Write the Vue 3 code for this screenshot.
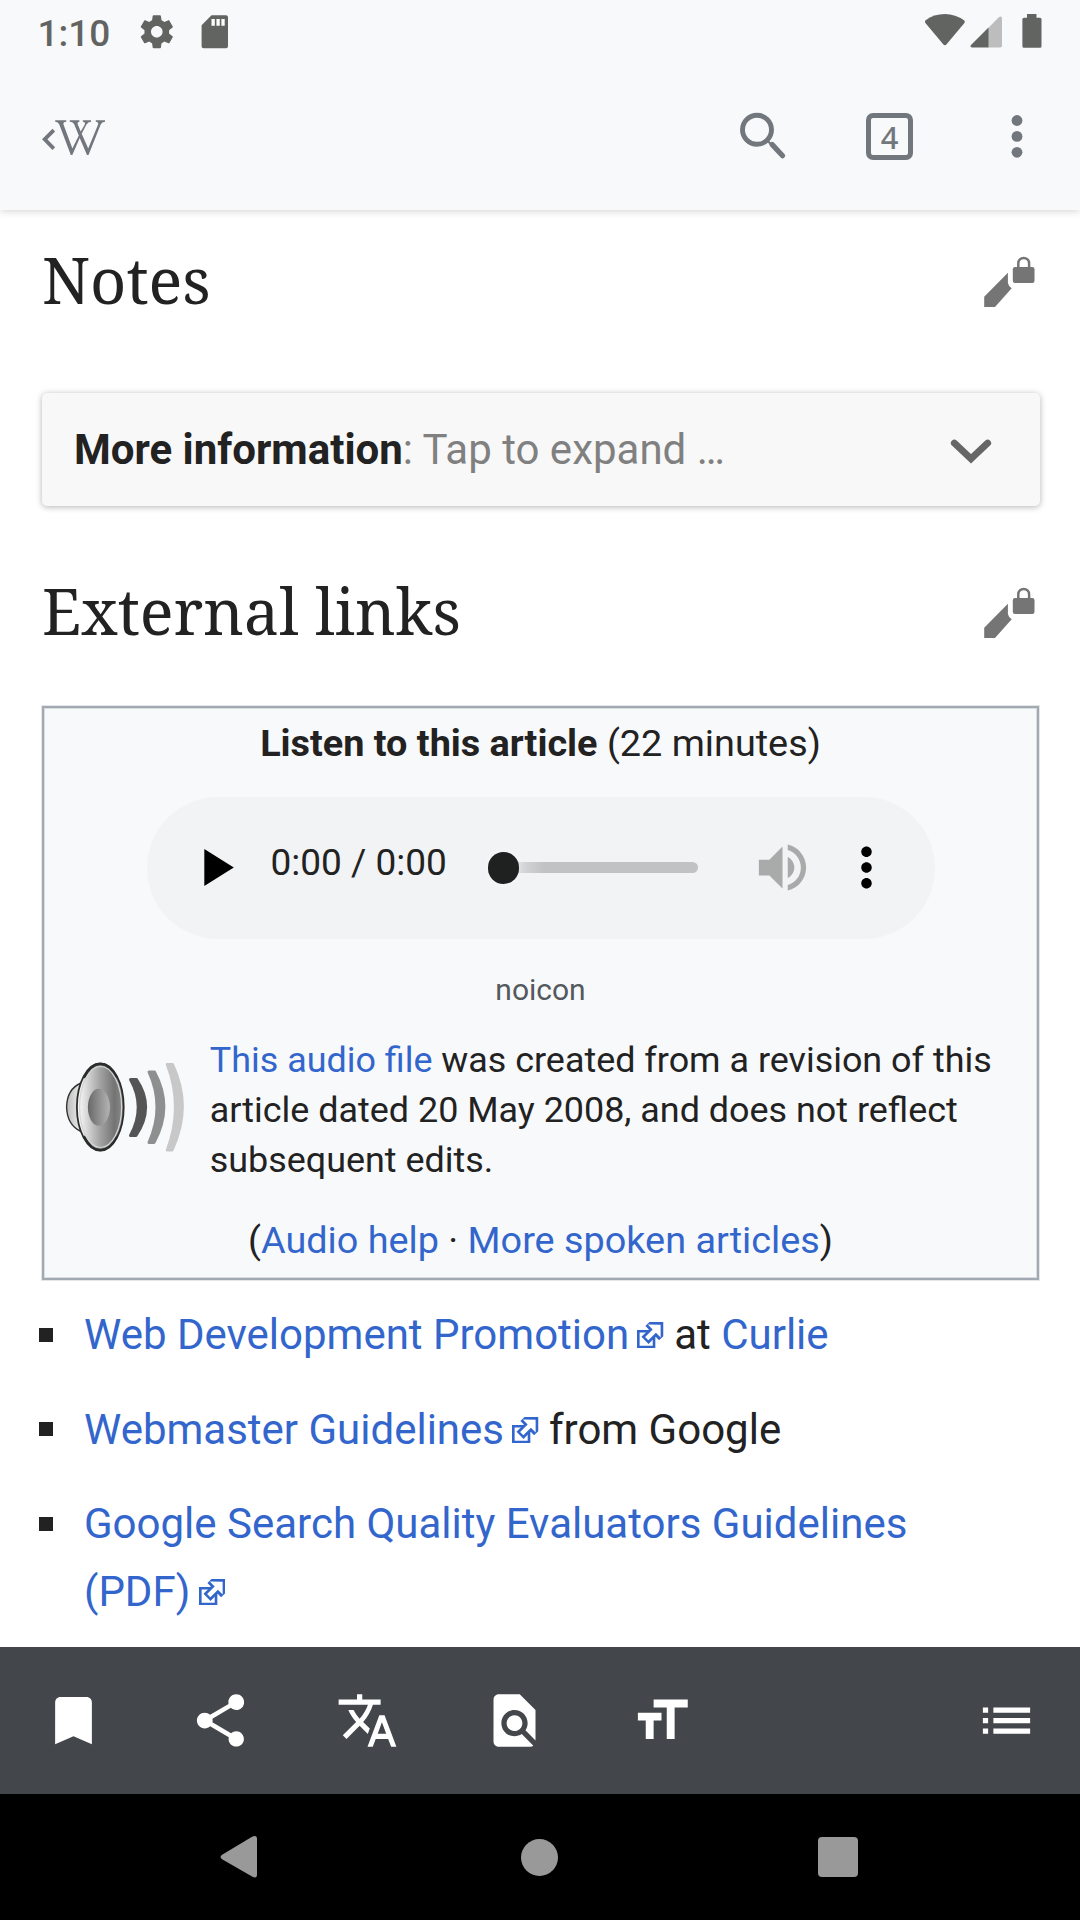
<script setup>
const tools = [
  { name: 'save', d: 'M17 3H7c-1.1 0-1.99.9-1.99 2L5 21l7-3 7 3V5c0-1.1-.9-2-2-2z' },
  { name: 'share', d: 'M18 16.08c-.76 0-1.44.3-1.96.77L8.91 12.7c.05-.23.09-.46.09-.7s-.04-.47-.09-.7l7.05-4.11c.54.5 1.25.81 2.04.81 1.66 0 3-1.34 3-3s-1.34-3-3-3-3 1.34-3 3c0 .24.04.47.09.7L8.04 9.81C7.5 9.31 6.79 9 6 9c-1.66 0-3 1.34-3 3s1.34 3 3 3c.79 0 1.5-.31 2.04-.81l7.12 4.16c-.05.21-.08.43-.08.65 0 1.61 1.31 2.92 2.92 2.92s2.92-1.31 2.92-2.92-1.31-2.92-2.92-2.92z' },
  { name: 'language', d: 'M12.87 15.07l-2.54-2.51.03-.03c1.74-1.94 2.98-4.17 3.71-6.53H17V4h-7V2H8v2H1v1.99h11.17C11.5 7.92 10.44 9.75 9 11.35 8.07 10.32 7.3 9.19 6.69 8h-2c.73 1.63 1.73 3.17 2.98 4.56l-5.09 5.02L4 19l5-5 3.11 3.11.76-2.04zM18.5 10h-2L12 22h2l1.12-3h4.75L21 22h2l-4.5-12zm-2.62 7l1.62-4.33L19.12 17h-3.24z' },
  { name: 'find', d: 'M20 19.59V8l-6-6H6c-1.1 0-1.99.9-1.99 2L4 20c0 1.1.89 2 1.99 2H18c.45 0 .85-.15 1.19-.4l-4.43-4.43c-.8.52-1.74.83-2.76.83-2.76 0-5-2.24-5-5s2.24-5 5-5 5 2.24 5 5c0 1.02-.31 1.96-.83 2.75L20 19.59zM9 13c0 1.66 1.34 3 3 3s3-1.34 3-3-1.34-3-3-3-3 1.34-3 3z' },
  { name: 'theme', d: 'M9 4v3h5v12h3V7h5V4H9zm-6 8h3v7h3v-7h3V9H3v3z' },
  { name: 'contents', d: 'M3 13h2v-2H3v2zm0 4h2v-2H3v2zm0-8h2V7H3v2zm4 4h14v-2H7v2zm0 4h14v-2H7v2zM7 7v2h14V7H7z' }
]

const links = [
  { label: 'Web Development Promotion', tail: ' at ', link: 'Curlie' },
  { label: 'Webmaster Guidelines', tail: ' from Google', link: '' },
  { label: 'Google Search Quality Evaluators Guidelines (PDF)', tail: '', link: '' }
]
</script>

<template>
  <div class="screen">
    <header class="top">
      <div class="status">
        <span class="clock">1:10</span>
        <svg class="gear" viewBox="0 0 24 24" width="39.6" height="39.6"><path d="M19.43 12.98c.04-.32.07-.64.07-.98s-.03-.66-.07-.98l2.11-1.65c.19-.15.24-.42.12-.64l-2-3.46c-.12-.22-.39-.3-.61-.22l-2.49 1c-.52-.4-1.08-.73-1.69-.98l-.38-2.65C14.46 2.18 14.25 2 14 2h-4c-.25 0-.46.18-.49.42l-.38 2.65c-.61.25-1.17.59-1.69.98l-2.49-1c-.23-.09-.49 0-.61.22l-2 3.46c-.13.22-.07.49.12.64l2.11 1.65c-.04.32-.07.65-.07.98s.03.66.07.98l-2.11 1.65c-.19.15-.24.42-.12.64l2 3.46c.12.22.39.3.61.22l2.49-1c.52.4 1.08.73 1.69.98l.38 2.65c.03.24.24.42.49.42h4c.25 0 .46-.18.49-.42l.38-2.65c.61-.25 1.17-.59 1.69-.98l2.49 1c.23.09.49 0 .61-.22l2-3.46c.12-.22.07-.49-.12-.64l-2.11-1.65zM12 15.5c-1.93 0-3.5-1.57-3.5-3.5s1.57-3.5 3.5-3.5 3.5 1.57 3.5 3.5-1.57 3.5-3.5 3.5z" /></svg>
        <svg class="card-icon" viewBox="0 0 24 24" width="39.6" height="39.6"><path fill="#fff" d="M9 3h10v6H9z" /><path d="M18 2h-8L4 8v12.8c0 .7.5 1.2 1.2 1.2h13.6c.7 0 1.2-.5 1.2-1.2V3.200c0-.7-.5-1.200-1.200-1.200zm-6 6.300h-2V4.200h2zm3 0h-2V4.200h2zm3 0h-2V4.200h2z" /></svg>
        <svg class="wifi" viewBox="0 0 42 34" width="42" height="34"><path d="M1.300 7.400Q.500 8.600 1.400 9.900L19.200 31.300Q20.900 33.200 22.600 31.300L40.400 9.900Q41.300 8.600 40.300 7.500 31.500 1 20.900 1 10 1 1.300 7.400z" /></svg>
        <svg class="signal" viewBox="0 0 32 32" width="32" height="32"><path fill="#bdbdbd" d="M18 12.300L28.800 1.200Q32 -.500 32 2.500V29.800Q32 31.500 30.300 31.500H18z" /><path d="M18.500 11.500V31.500H2Q-.300 30.800 1 29z" /></svg>
        <svg class="battery" viewBox="0 0 20 34" width="20" height="34"><path d="M5 0h9.500v3.700H18q1.500 0 1.500 1.500v27q0 1.500-1.500 1.500H2Q.400 33.700.400 32.200v-27Q.400 3.700 2 3.700h3z" /></svg>
      </div>
      <div class="toolbar">
        <svg class="logo" viewBox="42 118 66 40" width="66" height="40">
          <path d="M53.800 130.200L44.700 139.300 53.800 148.600" fill="none" stroke="#72777d" stroke-width="3.800" />
          <path d="M55.200 120.300H66.300V121.800Q62.700 122 63.500 124.600L72.400 148.500 78.800 135.500 74.300 124.600Q73.300 122 69.700 121.800V120.300H79.400V121.800Q76.900 122.200 77.800 124.600L80.700 131.400 84.700 124.800Q85.800 122.100 82.800 121.800V120.300H91V121.800Q88 122 86.300 124.800L81.700 133.800 88.200 148.500 98 124.800Q99 122.200 95.800 121.800V120.300H105V121.800Q101.800 122 100.700 124.600L88.500 154.900H87L79.700 138 72.300 154.900H70.800L59.300 124.600Q58.400 122.100 55.200 121.800z" />
        </svg>
        <svg class="search" viewBox="738 110 50 50" width="50" height="50"><circle cx="757" cy="129.800" r="14.500" fill="none" stroke="#72777d" stroke-width="4.900" /><path d="M766.500 139.500L771.500 145" stroke="#72777d" stroke-width="2" /><path d="M772 144.400L782.600 155.700" stroke="#72777d" stroke-width="5.200" stroke-linecap="round" /></svg>
        <div class="tabs">4</div>
        <svg class="more" viewBox="0 0 12 46" width="12" height="46"><circle cx="6" cy="7.500" r="5.400" /><circle cx="6" cy="23.400" r="5.400" /><circle cx="6" cy="39.300" r="5.400" /></svg>
      </div>
    </header>

    <main class="article">
      <div class="heading">
        <h2>Notes</h2>
        <svg class="edit" viewBox="0 0 52 52" width="52" height="52"><path d="M24.900 16.700V27Q25.500 30.300 28.700 32.300L12 51H1.200V40.700z" /><rect x="29.800" y="11" width="21.700" height="16" rx="2.200" /><path d="M35.300 12V7.300a5.400 5.400 0 0 1 10.800 0V12" fill="none" stroke="#757575" stroke-width="2.500" /></svg>
      </div>

      <div class="collapse">
        <span><b>More information</b>: Tap to expand …</span>
        <svg viewBox="0 0 44 30" width="44" height="30"><path d="M5.300 8L22 23.800 38.700 8" fill="none" stroke="#666" stroke-width="6.800" stroke-linecap="round" /></svg>
      </div>

      <div class="heading second">
        <h2>External links</h2>
        <svg class="edit" viewBox="0 0 52 52" width="52" height="52"><path d="M24.900 16.700V27Q25.500 30.300 28.700 32.300L12 51H1.200V40.700z" /><rect x="29.800" y="11" width="21.700" height="16" rx="2.200" /><path d="M35.300 12V7.300a5.400 5.400 0 0 1 10.800 0V12" fill="none" stroke="#757575" stroke-width="2.500" /></svg>
      </div>

      <section class="spoken">
        <div class="title"><b>Listen to this article</b> (22 minutes)</div>
        <div class="player">
          <svg class="play" viewBox="0 0 30 37" width="30" height="37"><path d="M.300 0V37L29.800 18.500z" /></svg>
          <span class="time">0:00 / 0:00</span>
          <div class="track"><i class="thumb"></i></div>
          <svg class="volume" viewBox="0 0 24 24" width="63" height="63"><path d="M3 9v6h4l5 5V4L7 9H3zm13.500 3c0-1.770-1.020-3.290-2.500-4.030v8.050c1.480-.73 2.500-2.250 2.500-4.020zM14 3.230v2.060c2.890.86 5 3.540 5 6.710s-2.110 5.850-5 6.710v2.060c4.010-.91 7-4.490 7-8.770s-2.990-7.860-7-8.770z" /></svg>
          <svg class="menu" viewBox="0 0 24 24" width="63" height="63"><path d="M12 8c1.100 0 2-.9 2-2s-.9-2-2-2-2 .9-2 2 .9 2 2 2zm0 2c-1.100 0-2 .9-2 2s.9 2 2 2 2-.9 2-2-.9-2-2-2zm0 6c-1.100 0-2 .9-2 2s.9 2 2 2 2-.9 2-2-.9-2-2-2z" /></svg>
        </div>
        <div class="caption">noicon</div>
        <div class="about">
          <svg class="speaker" viewBox="64 1060 124 94" width="124" height="94">
            <defs>
              <linearGradient id="cone" x1="0" x2="1"><stop offset="0" stop-color="#fff" /><stop offset=".5" stop-color="#a2a2a2" /><stop offset=".8" stop-color="#747474" /><stop offset="1" stop-color="#8b8b8b" /></linearGradient>
              <linearGradient id="dome" x1="0" x2="1"><stop offset="0" stop-color="#686868" /><stop offset="1" stop-color="#b4b4b4" /></linearGradient>
              <linearGradient id="back" x1="0" x2="1"><stop offset="0" stop-color="#bcbcbc" /><stop offset="1" stop-color="#eee" /></linearGradient>
            </defs>
            <path d="M81 1083Q67 1089 66.600 1107 67 1125 81 1131.500z" fill="url(#back)" stroke="#333" stroke-width="1.400" />
            <ellipse cx="100.300" cy="1107" rx="23.400" ry="43.700" fill="url(#cone)" stroke="#2b2d2d" stroke-width="1.800" />
            <path d="M84 1078Q91 1064 100.300 1064 110 1064 117 1078M84 1136Q91 1150 100.300 1150 110 1150 117 1136" fill="none" stroke="#2b2d2d" stroke-width="2.300" />
            <ellipse cx="100.600" cy="1107" rx="21" ry="40.500" fill="none" stroke="#d5d5d5" stroke-width="1.200" />
            <ellipse cx="98.900" cy="1107.300" rx="11" ry="18.500" fill="url(#dome)" />
            <g stroke-width="3" stroke-linejoin="round">
              <path d="M130.500 1079.500H136.500Q155 1107 136 1135.500H130.500Q146 1107 130.500 1079.500z" fill="#555" stroke="#555" />
              <path d="M149 1072H154.500Q173.500 1107 154 1142.500H149Q165 1107 149 1072z" fill="#8e9090" stroke="#8e9090" />
              <path d="M167.300 1064.500H172.500Q192.500 1107 172 1150H167.300Q183.500 1107 167.300 1064.500z" fill="#c8c8c8" stroke="#c8c8c8" />
            </g>
          </svg>
          <p><a>This audio file</a> was created from a revision of this<br>article dated 20 May 2008, and does not reflect<br>subsequent edits.</p>
        </div>
        <div class="help">(<a>Audio help</a> · <a>More spoken articles</a>)</div>
      </section>

      <ul>
        <li v-for="item in links" :key="item.label">
          <i class="bullet"></i>
          <div><a>{{ item.label }}<svg class="out" viewBox="1 1 10 10" width="26.250" height="26.250"><path fill="#fff" stroke="#36c" d="M1.500 4.518h5.982V10.500H1.500z" /><path fill="#36c" d="M5.765 1H11v5.390L9.427 7.937l-1.310-1.310L5.393 9.350l-2.690-2.688 2.810-2.808L4.200 2.544z" /><path fill="#fff" d="M9.995 2.004l.022 4.885L8.200 5.070 5.320 7.950 4.090 6.723l2.882-2.880-1.850-1.852z" /></svg></a>{{ item.tail }}<a v-if="item.link">{{ item.link }}</a></div>
        </li>
      </ul>
    </main>

    <footer class="tools">
      <svg v-for="t in tools" :key="t.name" :class="t.name" viewBox="0 0 24 24" width="63" height="63"><path :d="t.d" /></svg>
    </footer>
    <nav class="nav">
      <svg viewBox="0 0 38 44" width="38" height="44"><path d="M2.500 19.500L32.500 1.500Q37 -.5 37 4V39.500Q37 44 32.500 41.800L2.500 24.500Q-1.500 22 2.500 19.500z" /></svg>
      <i class="home"></i>
      <i class="recent"></i>
    </nav>
  </div>
</template>

<style>
body { margin: 0; background: #fff; }
</style>

<style scoped>
.screen { width: 1080px; height: 1920px; display: flex; flex-direction: column; overflow: hidden; background: #fff; color: #222; font-family: Roboto, sans-serif; }
svg { display: block; flex: none; }
a { color: #36c; }
i { display: block; flex: none; }
b { font-weight: 700; }
.top { height: 210px; flex: none; background: #f8f9fb; box-shadow: 0 1px 8px rgba(0, 0, 0, .18); }
.status { height: 63px; display: flex; align-items: flex-start; fill: #626462; }
.clock { width: 97px; padding-left: 37.500px; font-size: 37px; line-height: 68px; font-weight: 500; color: #626462; white-space: nowrap; }
.gear { margin: 12px 0 0 2.500px; }
.card-icon { margin: 12px 0 0 18.500px; }
.wifi { margin: 13px 0 0 689.500px; }
.signal { margin: 15.500px 0 0 4px; }
.battery { margin: 14px 0 0 19.500px; }
.toolbar { height: 147px; display: flex; align-items: flex-start; fill: #72777d; }
.logo { margin: 55px 0 0 42px; }
.search { margin: 47px 0 0 630px; }
.tabs { box-sizing: border-box; width: 47px; height: 47px; margin: 50px 0 0 78px; border: 5px solid #72777d; border-radius: 7px; color: #72777d; font: 500 31px/38px "Noto Sans", sans-serif; text-align: center; }
.more { margin: 50px 0 0 97.500px; }
.article { height: 1437px; flex: none; }
.heading { height: 100px; margin: 22px 42px 0; display: flex; justify-content: space-between; align-items: flex-start; }
h2 { margin: 0; font: 400 63px/95px "Noto Serif", "DejaVu Serif Condensed", "DejaVu Serif", serif; white-space: nowrap; }
.edit { margin: 24px 3px 0 0; fill: #757575; }
.collapse { box-sizing: border-box; height: 113px; margin: 61px 40px 0 42px; padding: 0 47px 0 32px; display: flex; align-items: center; justify-content: space-between; border-radius: 5px; background: #f8f8f8; box-shadow: 0 1px 6px rgba(0, 0, 0, .3); color: #808080; font-size: 42px; line-height: 63px; }
.collapse b { color: #222; }
.second { margin-top: 56.700px; }
.spoken { box-sizing: border-box; width: 997px; height: 574px; margin: 43.300px 0 0 42px; border: 2px solid #a2a9b1; background: #f8f9fb; box-shadow: 0 0 0 1px #e4e7ea, inset 0 0 0 1px #d9dde2; padding-top: 10px; }
.title, .help { text-align: center; font-size: 37.800px; line-height: 50px; white-space: nowrap; }
.player { width: 787.500px; height: 142px; margin: 29px 0 0 103px; border-radius: 71px; background: #f1f3f4; display: flex; align-items: center; }
.play { margin-left: 57px; }
.time { width: 176px; margin: -9px 0 0 36.500px; font-size: 37px; line-height: 44px; white-space: nowrap; }
.track { width: 194.500px; height: 11px; margin-left: 57px; border-radius: 6px; display: flex; align-items: center; background: linear-gradient(90deg, #d8d9da 15px, #c1c2c3 40px); }
.thumb { width: 31.500px; height: 31.500px; margin-left: -16px; border-radius: 50%; background: #1f2120; box-shadow: 0 0 8px rgba(255, 255, 255, .5); }
.volume { margin-left: 52.500px; fill: #a9abaa; }
.menu { margin-left: 21px; }
.caption { margin-top: 31px; color: #54595d; font-size: 30px; line-height: 40px; text-align: center; }
.about { height: 150px; margin-top: 25.500px; padding-left: 19.500px; display: flex; align-items: flex-start; }
.speaker { margin-top: 24.500px; }
p { margin: 0 0 0 22.300px; font-size: 35.900px; line-height: 50px; white-space: nowrap; }
.help { margin-top: 30px; }
ul { margin: 21.500px 0 0; padding: 0; list-style: none; font-size: 42px; line-height: 68px; }
li { display: flex; align-items: flex-start; margin: 0 100px 26.500px 39px; }
.bullet { width: 14px; height: 14px; margin: 26.500px 31px 0 0; background: #222; }
.out { display: inline-block; margin-left: 8.300px; vertical-align: 1px; }
.tools { height: 147px; flex: none; display: flex; align-items: center; gap: 84px; padding: 0 42px; background: #43464a; fill: #fff; }
.contents { margin-left: auto; }
.nav { height: 126px; flex: none; display: flex; align-items: center; background: #000; fill: #999; padding-left: 220px; }
.home { width: 37px; height: 37px; border-radius: 50%; background: #999; margin-left: 263px; }
.recent { width: 40px; height: 40px; border-radius: 4px; background: #999; margin-left: 260px; }
</style>
